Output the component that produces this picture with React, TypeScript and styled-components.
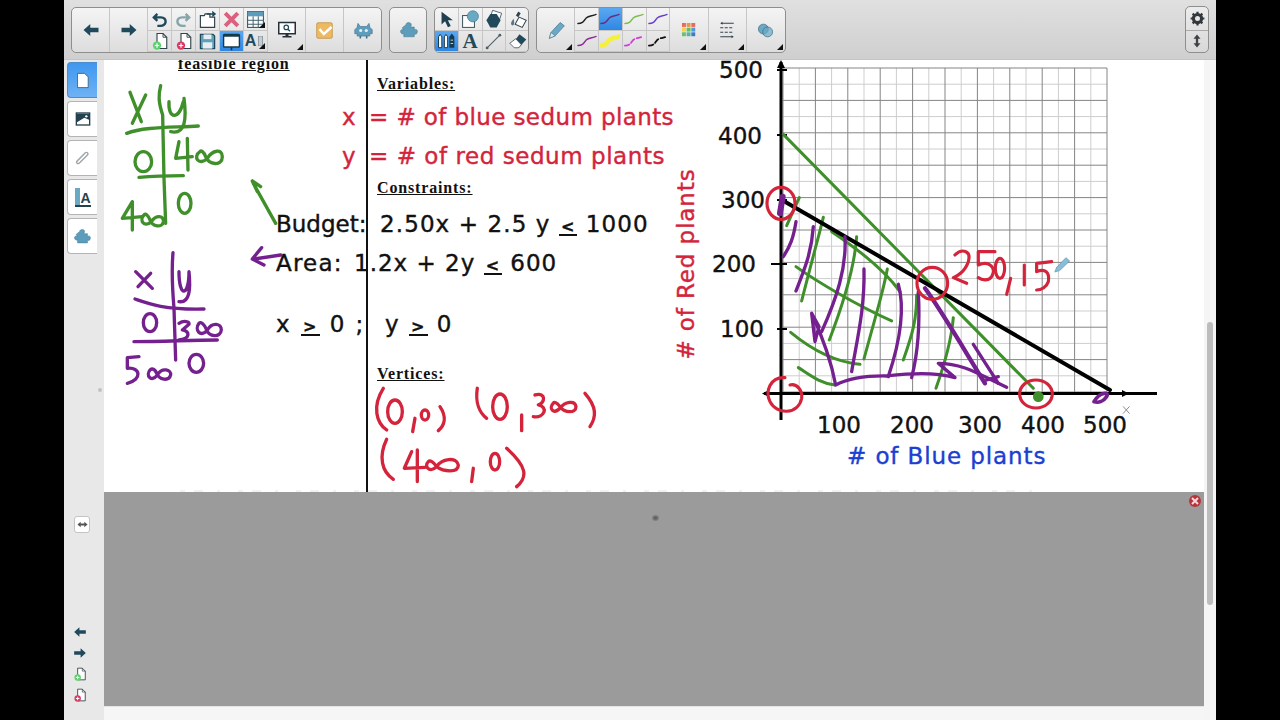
import styled, { createGlobalStyle } from 'styled-components'
import type { ReactNode } from 'react'

const GlobalStyle = createGlobalStyle`
  html, body {
    margin: 0;
    height: 100%;
    background: #000;
    overflow: hidden;
    font-family: "DejaVu Sans", sans-serif;
  }
`

const TEAL = '#21495c'
const INK_TEAL = '#5b9dbb'

function Svg({ size = 20, children }: { size?: number; children: ReactNode }) {
  return (
    <svg width={size} height={size} viewBox="0 0 24 24">
      {children}
    </svg>
  )
}

const ArrowLeft = ({ size = 18 }: { size?: number }) => (
  <Svg size={size}><path d="M2 12 L11 4 V9 H22 V15 H11 V20Z" fill={TEAL} /></Svg>
)
const ArrowRight = ({ size = 18 }: { size?: number }) => (
  <Svg size={size}><path d="M22 12 L13 4 V9 H2 V15 H13 V20Z" fill={TEAL} /></Svg>
)
const Undo = () => (
  <Svg size={17}>
    <path d="M9 4 L4 9 L9 14 M4 9 H14 C23 9 23 21 13 21 H9" fill="none" stroke={TEAL} strokeWidth="3.4" />
  </Svg>
)
const Redo = () => (
  <Svg size={17}>
    <path d="M15 4 L20 9 L15 14 M20 9 H10 C1 9 1 21 11 21 H15" fill="none" stroke="#86a5ab" strokeWidth="3.4" />
  </Svg>
)
const PageBadge = ({ color, size = 18 }: { color: string; size?: number }) => (
  <Svg size={size}>
    <path d="M8 2 H16 L21 7 V22 H8Z" fill="#fff" stroke="#33434c" strokeWidth="1.5" />
    <path d="M16 2 V7 H21" fill="none" stroke="#33434c" strokeWidth="1.2" />
    <circle cx="8" cy="18" r="5.5" fill={color} />
    <path d="M5 18 H11 M8 15 V21" stroke="#fff" strokeWidth="1.6" />
  </Svg>
)
const OpenPage = () => (
  <Svg size={19}>
    <path d="M3 7 H8 L9 5 H15 V9 H21 V22 H3Z" fill="#fff" stroke="#33434c" strokeWidth="1.5" />
    <path d="M11 4 H18 L18 1 L23 5 L18 9 V6 H11Z" fill={TEAL} />
  </Svg>
)
const Cross = () => (
  <Svg size={19}>
    <path d="M4 4 L20 20 M20 4 L4 20" stroke="#d9637e" strokeWidth="5" />
  </Svg>
)
const TableIcon = () => (
  <Svg size={19}>
    <rect x="2" y="2" width="20" height="20" fill="#fff" stroke="#3d5b68" strokeWidth="1.4" />
    <rect x="2" y="2" width="20" height="6" fill={INK_TEAL} />
    <path d="M2 13 H22 M2 18 H22 M9 8 V22 M15.500 8 V22" stroke="#3d5b68" strokeWidth="1.2" />
  </Svg>
)
const Floppy = () => (
  <Svg size={19}>
    <path d="M3 3 H19 L21 5 V21 H3Z" fill="#5f9fbc" stroke={TEAL} strokeWidth="1.6" />
    <rect x="7" y="3" width="10" height="6" fill="#e6eef2" />
    <rect x="6" y="13" width="12" height="8" fill="#e6eef2" />
  </Svg>
)
const Screen = () => (
  <Svg size={19}>
    <rect x="2" y="3" width="20" height="16" rx="1" fill="#fff" stroke="#173a4a" strokeWidth="1.8" />
    <rect x="2" y="3" width="20" height="3" fill="#173a4a" />
    <path d="M12 19 V23" stroke="#173a4a" strokeWidth="2" />
  </Svg>
)
const MeasureIcon = () => (
  <MeasureBox>
    A
    <Svg size={10}>
      <rect x="6" y="0" width="10" height="24" fill="#c5cdd0" stroke="#6b7c84" strokeWidth="1.5" />
    </Svg>
  </MeasureBox>
)
const MonitorSearch = () => (
  <Svg size={18}>
    <rect x="1" y="2" width="22" height="15" fill="#fff" stroke="#24313a" strokeWidth="2" />
    <circle cx="11" cy="8.500" r="3" fill="none" stroke={TEAL} strokeWidth="1.600" />
    <path d="M13 11 L16 13.500" stroke={TEAL} strokeWidth="1.800" />
    <path d="M10 17 H14 V20 H18 V22 H6 V20 H10Z" fill="#24313a" />
  </Svg>
)
const CheckBox = () => (
  <Svg size={17}>
    <rect x="1" y="1" width="22" height="22" rx="2" fill="#efb95f" stroke="#b98c3b" />
    <path d="M5 10 L11 17 L22 7" fill="none" stroke="#fff" strokeWidth="3.500" />
  </Svg>
)
const Robot = () => (
  <Svg size={19}>
    <path d="M5 3 L8 7 H16 L19 3 L20 8 L23 11 V16 H20 V19 H4 V16 H1 V11 L4 8Z" fill="#5f9dbd" stroke="#3d718d" strokeWidth="0.800" />
    <circle cx="8.500" cy="12" r="2" fill="#e8eef1" />
    <circle cx="15.500" cy="12" r="2" fill="#e8eef1" />
    <path d="M8 19 V22 M16 19 V22" stroke="#3d718d" strokeWidth="2" />
  </Svg>
)
const Puzzle = ({ size = 18 }: { size?: number }) => (
  <Svg size={size}>
    <path
      d="M8 5 C8 1 15 1 15 5 C15 7 14 7 14 8 H19 V12 C21 10 24 12 23 15 C22.500 18 20 18 19 17 V21 H5 V17 C2 18 0 15 1 12.500 C2 11 4 11 5 12 L3 9 Z"
      fill={INK_TEAL}
      stroke="#44778f"
      strokeWidth="0.700"
    />
  </Svg>
)
const Pointer = () => (
  <Svg size={17}>
    <path d="M5 1 L5 19 L10 14.500 L14 23 L18 21 L14 13 L21 13Z" fill="#1f4050" />
  </Svg>
)
const ShapeIcon = () => (
  <Svg size={19}>
    <rect x="2" y="7" width="15" height="15" fill="#fff" stroke="#45565e" strokeWidth="1.300" />
    <circle cx="15" cy="8" r="7" fill="#6aa9c4" stroke="#4d7f96" />
  </Svg>
)
const FillIcon = () => (
  <Svg size={19}>
    <rect x="9" y="2" width="12" height="10" fill="#fff" stroke="#45565e" transform="rotate(18 15 7)" />
    <path d="M8 5 H16 L21 13 L16 22 H8 L3 13Z" fill={TEAL} />
  </Svg>
)
const Bucket = () => (
  <Svg size={19}>
    <path d="M14 9 L23 13 L18 22 L9 18Z" fill="#fff" stroke="#33434c" strokeWidth="1.300" />
    <path d="M13 2 L16 4 L13 9 L10 7Z" fill="#33434c" />
    <path d="M7 11 C4 15 3 17 4.500 19 C7 21 9 17 7 11Z" fill="#5e7480" />
  </Svg>
)
const PensIcon = () => (
  <Svg size={20}>
    <path d="M5 4 L7 7 V20 H3 V7Z M12 4 L14 7 V20 H10 V7Z" fill="#fff" stroke="#173a4a" strokeWidth="1.200" />
    <path d="M19 3 L22 7 V20 H16 V7Z" fill="#173a4a" />
    <path d="M17.500 11 H20.500 M17.500 15 H20.500" stroke="#e6f0f5" />
  </Svg>
)
const LineIcon = () => (
  <Svg size={17}>
    <path d="M3 21 L21 3" stroke="#4e5f68" strokeWidth="1.500" />
    <circle cx="3" cy="21" r="2" fill="#4e5f68" />
    <circle cx="21" cy="3" r="2" fill="#4e5f68" />
  </Svg>
)
const EraserIcon = () => (
  <Svg size={18}>
    <path d="M14 3 L23 10 L13 21 L5 15Z" fill={TEAL} />
    <path d="M9 9 L1 15 L7 21 H13 L16.500 17Z" fill="#fff" stroke="#33434c" />
  </Svg>
)
const Pencil = () => (
  <Svg size={20}>
    <path d="M4 22 L6 15 L17 3 L22 7 L11 19Z" fill="#6ba8c6" stroke="#4f7f97" strokeWidth="1" />
    <path d="M4 22 L6 15 L11 19Z" fill="#e5e5e5" stroke="#4f7f97" strokeWidth="0.800" />
  </Svg>
)
const Stroke = ({ color, width = 1.500, dash }: { color: string; width?: number; dash?: string }) => (
  <svg width="20" height="14" viewBox="0 0 22 14">
    <path
      d="M1 12 C6 12 7 10 10 6 C13 3 17 4 21 2"
      fill="none"
      stroke={color}
      strokeWidth={width}
      strokeDasharray={dash}
      strokeLinecap="round"
    />
  </svg>
)
const Palette = () => (
  <svg width="14" height="14" viewBox="0 0 18 18">
    {['#ea6a5a', '#e8983f', '#e56a5f', '#f2d24e', '#68bd62', '#4f9bd4', '#69c16c', '#53b4a8', '#3f79c4'].map((c, i) => (
      <rect key={i} x={(i % 3) * 6} y={Math.floor(i / 3) * 6} width="5" height="5" fill={c} />
    ))}
  </svg>
)
const LineStyle = () => (
  <Svg size={18}>
    <path d="M3 3 L6 1 V5Z M21 21 L18 19 V23Z" fill="#33434c" />
    <path d="M4 3 H21 M3 21 H19" stroke="#33434c" strokeWidth="1.400" />
    <path d="M3 9 H21 M3 15 H21" stroke="#33434c" strokeWidth="1.400" strokeDasharray="4 2" />
  </Svg>
)
const Circles = () => (
  <Svg size={17}>
    <circle cx="9" cy="10" r="7" fill="#6ba8c6" stroke="#3f708a" />
    <circle cx="15" cy="14" r="7" fill="#6ba8c6" fillOpacity="0.700" stroke="#3f708a" />
  </Svg>
)
const Gear = () => (
  <Svg size={15}>
    <circle cx="12" cy="12" r="6.500" fill="none" stroke="#33383c" strokeWidth="5" />
    <path
      d="M12 1 V6 M12 18 V23 M1 12 H6 M18 12 H23 M4.200 4.200 L8 8 M16 16 L19.800 19.800 M19.800 4.200 L16 8 M8 16 L4.200 19.800"
      stroke="#33383c"
      strokeWidth="3.500"
    />
  </Svg>
)
const UpDown = () => (
  <Svg size={14}>
    <path d="M12 1 L18 8 H14 V16 H18 L12 23 L6 16 H10 V8 H6Z" fill="#3d4347" />
  </Svg>
)
const Paperclip = () => (
  <Svg size={17}>
    <path
      d="M20 6 L8 18 C5 21 2 18 5 15 L16 4 C18 2 21 5 19 7 L9 17"
      fill="none"
      stroke="#9fa7aa"
      strokeWidth="2"
    />
  </Svg>
)
const ImageIcon = () => (
  <Svg size={16}>
    <rect x="2" y="3" width="20" height="18" fill="#fff" stroke="#24414f" strokeWidth="2" />
    <path d="M3 4 H21 V13 L14 10 L3 17Z" fill="#24414f" />
    <circle cx="17" cy="8" r="1.800" fill="#fff" />
  </Svg>
)
const Expand = () => (
  <Svg size={11}>
    <path d="M1 12 L8 6 V10 H16 V6 L23 12 L16 18 V14 H8 V18Z" fill="#555" />
  </Svg>
)
const TextStyleIcon = () => (
  <TextStyleBox>
    <span>A</span>
  </TextStyleBox>
)

const App = styled.div`
  width: 1152px;
  height: 720px;
  margin-left: 64px;
  display: flex;
  flex-direction: column;
  background: #f4f4f4;
`

const Toolbar = styled.header`
  height: 60px;
  flex: none;
  box-sizing: border-box;
  padding: 7px 7px 0 7px;
  display: flex;
  align-items: flex-start;
  gap: 7px;
  background: linear-gradient(#e0e0e0, #cfcfcf);
  border-bottom: 1px solid #c4c4c4;
`

const ToolGroup = styled.div<{ $w: number }>`
  display: flex;
  width: ${(p) => p.$w}px;
  height: 46px;
  flex: none;
  box-sizing: border-box;
  border: 1px solid #8e8e8e;
  border-radius: 5px;
  overflow: hidden;
  background: linear-gradient(#f4f4f4, #dddddd);
`

const BigCell = styled.div`
  position: relative;
  flex: 1 0 38px;
  box-sizing: border-box;
  display: flex;
  align-items: center;
  justify-content: center;
  border-right: 1px solid #c6c6c6;

  &:last-child {
    border-right: 0;
  }
`

const Corner = styled.i`
  position: absolute;
  right: 2px;
  bottom: 2px;
  border-style: solid;
  border-width: 0 0 6px 6px;
  border-color: transparent transparent #111 transparent;
`

const SmallGrid = styled.div<{ $cols: number }>`
  flex: none;
  width: ${(p) => p.$cols * 24 - (p.$cols === 4 ? 1 : 0)}px;
  display: grid;
  grid-template-columns: repeat(${(p) => p.$cols}, 1fr);
  grid-template-rows: 23px 21px;
`

const SmallCell = styled.div<{ $on?: boolean }>`
  position: relative;
  display: flex;
  align-items: center;
  justify-content: center;
  box-sizing: border-box;
  border-right: 1px solid #c6c6c6;
  border-bottom: 1px solid #c6c6c6;
  background: ${(p) => (p.$on ? 'linear-gradient(#5aa8f2, #2f87e2)' : 'transparent')};
`

const SideGroup = styled.div`
  margin-left: auto;
  width: 24px;
  height: 47px;
  margin-top: -1px;
  box-sizing: border-box;
  border: 1px solid #8e8e8e;
  border-radius: 5px;
  overflow: hidden;
  display: grid;
  grid-template-rows: 1fr 1fr;
  background: linear-gradient(#ececec, #d8d8d8);
`

const SideCell = styled.div`
  display: flex;
  align-items: center;
  justify-content: center;

  & + & {
    border-top: 1px solid #aaa;
  }
`

const MeasureBox = styled.div`
  display: flex;
  align-items: center;
  font: 700 16px "Liberation Sans", sans-serif;
  color: ${TEAL};
`

const LetterA = styled.span`
  font: 700 21px "Liberation Serif", serif;
  color: ${TEAL};
`

const TextStyleBox = styled.div`
  width: 16px;
  height: 17px;
  background: linear-gradient(90deg, #6aa9c4 30%, transparent 30%);
  border-bottom: 2px solid #24414f;
  display: flex;
  justify-content: flex-end;
  align-items: flex-end;
  font: 700 14px "Liberation Sans", sans-serif;
  line-height: 14px;
  color: #24414f;
`

const Body = styled.div`
  flex: 1;
  min-height: 0;
  display: flex;
`

const Sidebar = styled.aside`
  position: relative;
  width: 40px;
  flex: none;
  box-sizing: border-box;
  padding: 2px 0 18px 3px;
  display: flex;
  flex-direction: column;
  background: #e8e8e8;
`

const Tabs = styled.nav`
  display: flex;
  flex-direction: column;
  gap: 3px;
`

const Tab = styled.div<{ $on?: boolean }>`
  width: 30px;
  height: 36px;
  box-sizing: border-box;
  display: flex;
  align-items: center;
  justify-content: center;
  border: 1px solid ${(p) => (p.$on ? '#4a8ccc' : '#b4b4b4')};
  border-right: 0;
  border-radius: 4px 0 0 4px;
  background: ${(p) => (p.$on ? 'linear-gradient(#3f97ef, #6fb2f4)' : '#fff')};
`

const Handle = styled.i`
  position: absolute;
  left: 34px;
  top: 328px;
  width: 4px;
  height: 4px;
  border-radius: 50%;
  background: #c2c2c2;
`

const ExpandButton = styled.div`
  width: 16px;
  height: 17px;
  margin: 262px 0 0 7px;
  display: flex;
  align-items: center;
  justify-content: center;
  border: 1px solid #c4c4c4;
  border-radius: 3px;
  background: #fff;
  box-sizing: border-box;
`

const PageTools = styled.div`
  margin: auto 0 0 6px;
  display: flex;
  flex-direction: column;
  gap: 7px;
  align-items: flex-start;

  svg {
    display: block;
  }
`

const Workspace = styled.main`
  width: 1100px;
  flex: none;
  display: flex;
  flex-direction: column;
`

const Canvas = styled.section`
  position: relative;
  height: 432px;
  flex: none;
  overflow: hidden;
  background: #fff;
`

const Shade = styled.div`
  position: relative;
  flex: 1;
  background: #9b9b9b;
`

const Footer = styled.div`
  height: 13px;
  flex: none;
  background: #f6f6f6;
  border-top: 1px solid #e4e4e4;
`

const CloseDot = styled.div`
  position: absolute;
  top: 3px;
  right: 3px;
  width: 12px;
  height: 12px;
  border-radius: 50%;
  background: #b8343d;
  display: flex;
  align-items: center;
  justify-content: center;
`

const Smudge = styled.i`
  position: absolute;
  left: 548px;
  top: 23px;
  width: 7px;
  height: 6px;
  border-radius: 50%;
  background: radial-gradient(#555, #9b9b9b);
`

const Scrollbar = styled.div`
  width: 12px;
  flex: none;
  padding-top: 262px;
  box-sizing: border-box;
  background: #f5f5f5;
`

const Thumb = styled.div`
  width: 6px;
  height: 283px;
  margin-left: 3px;
  border-radius: 3px;
  background: #bdbdbd;
`

const Ink = styled.svg`
  position: absolute;
  left: 0;
  top: 0;
`

const Rule = styled.div`
  position: absolute;
  left: 262px;
  top: 0;
  width: 2px;
  height: 100%;
  background: #111;
`

const Label = styled.span<{ $x: number; $y: number; $color?: string; $size?: number; $spacing?: number }>`
  position: absolute;
  left: ${(p) => p.$x - 104}px;
  top: ${(p) => p.$y - 68}px;
  line-height: 18px;
  white-space: pre;
  font-family: "DejaVu Sans", sans-serif;
  font-size: ${(p) => p.$size ?? 23}px;
  letter-spacing: ${(p) => p.$spacing ?? 0}px;
  color: ${(p) => p.$color ?? '#111'};
  -webkit-text-stroke: 0.4px ${(p) => p.$color ?? '#111'};
`

const Heading = styled(Label)`
  font-family: "Liberation Serif", serif;
  font-weight: 700;
  font-size: 16px;
  text-decoration: underline;
  letter-spacing: 0.85px;
  -webkit-text-stroke: 0;
`

const VerticalLabel = styled(Label)`
  transform: translate(-50%, -50%) rotate(-90deg);
  top: ${(p) => p.$y - 60}px;
`

const Under = styled.span`
  display: inline-block;
  font-size: 16px;
  font-weight: 700;
  line-height: 14px;
  padding: 0 2px;
  border-bottom: 2px solid #111;
  vertical-align: 0;
`

const FaintEdge = styled.path`
  stroke: #f1f1f1;
  stroke-width: 2;
  stroke-dasharray: 5 9 9 14 3 18;
  fill: none;
`

const GREEN = '#3f8f2a'
const PURPLE = '#74208f'
const RED = '#d3243b'

const gridMajor = Array.from({ length: 11 }, (_, i) => i)
const gridMinor = Array.from({ length: 10 }, (_, i) => i)

function Graph() {
  const left = 783
  const top = 68
  const step = 32.4
  return (
    <g fill="none">
      {gridMinor.map((i) => (
        <g key={i} stroke="#cdcdcd" strokeWidth="1">
          <path d={`M${left + (i + 0.5) * step} ${top} V${top + 10 * step}`} />
          <path d={`M${left} ${top + (i + 0.5) * step} H${left + 10 * step}`} />
        </g>
      ))}
      {gridMajor.map((i) => (
        <g key={i} stroke="#858585" strokeWidth="1">
          <path d={`M${left + i * step} ${top} V${top + 10 * step}`} />
          <path d={`M${left} ${top + i * step} H${left + 10 * step}`} />
        </g>
      ))}
      <path d="M781 62 V420 M764 393.500 H1157" stroke="#000" strokeWidth="3" />
      <path d="M781 60 L777 68 H785Z M762 393.500 L769 390 V397Z M1122 390 L1129 393.500 L1122 397Z" fill="#000" />
      <path d="M777 70 H787 M777 135 H787 M777 200 H787 M771 264 H787 M777 329 H787" stroke="#000" strokeWidth="2" />
    </g>
  )
}

const chartGreen = [
  'M388 428 L350 512',
  'M460 487 C450 530 430 600 395 738',
  'M560 545 C555 620 530 720 478 855',
  'M652 642 C640 710 620 770 582 912',
  'M740 720 C740 790 730 830 700 915',
  'M850 788 C845 850 830 910 798 1000',
  'M485 530 C560 580 640 640 690 710',
  'M378 635 C440 680 560 750 665 798',
  'M362 832 C420 880 490 920 570 928',
  'M385 938 C420 960 450 985 495 990',
]

const chartPurple = [
  'M378 500 C370 550 360 575 340 605',
  'M430 515 C425 590 405 640 378 708',
  'M525 545 C530 640 500 730 455 830',
  'M582 642 C585 760 560 860 545 950',
  'M685 688 C705 760 690 860 655 965',
  'M745 710 C750 800 745 890 725 968',
  'M425 775 L435 860 L447 815 L425 775 C450 830 480 900 497 990 C540 968 590 962 650 963 C720 955 790 950 855 968 L805 925 C880 925 930 960 1010 997',
  'M910 868 L985 985',
  'M950 975 L985 965',
]

function ChartInk() {
  return (
    <g transform="translate(670 55) scale(0.3333)" fill="none" strokeLinecap="round" strokeLinejoin="round">
      <path d="M340 238 L1090 1000" stroke={GREEN} strokeWidth="9" />
      {chartGreen.map((d) => (
        <path key={d} d={d} stroke={GREEN} strokeWidth="9" />
      ))}
      <path d="M345 440 L1320 1005" stroke="#000" strokeWidth="12" />
      {chartPurple.map((d) => (
        <path key={d} d={d} stroke={PURPLE} strokeWidth="10" />
      ))}
      <path d="M765 700 C810 760 880 880 945 985" stroke={PURPLE} strokeWidth="13" />
      <path d="M338 425 L330 475" stroke={PURPLE} strokeWidth="18" />
      <path d="M1272 1040 C1290 1010 1320 1010 1310 1025 C1300 1040 1285 1045 1272 1040" stroke={PURPLE} strokeWidth="11" />
      <circle cx="1105" cy="1025" r="16" fill={GREEN} />
      <g stroke={RED} strokeWidth="9.500">
        <ellipse cx="333" cy="445" rx="42" ry="48" />
        <ellipse cx="787" cy="685" rx="46" ry="48" />
        <ellipse cx="1098" cy="1017" rx="49" ry="42" />
        <path d="M345 968 C300 965 285 1010 300 1040 C320 1080 385 1080 395 1030 C398 1005 380 985 360 990" />
        <path d="M855 600 C875 580 905 585 895 620 C885 650 860 665 850 668 L890 685" />
        <path d="M975 590 L925 590 L925 630 C960 615 980 640 965 665 C955 680 935 675 925 668" />
        <ellipse cx="990" cy="640" rx="14" ry="30" />
        <path d="M1022 670 L1010 718" />
        <path d="M1063 630 L1063 690" />
        <path d="M1145 620 L1100 625 L1100 650 C1125 640 1140 650 1135 680 C1130 695 1115 705 1100 705" />
      </g>
      <path d="M1155 650 L1160 637 L1188 608 L1199 618 L1170 646Z" fill="#86bdd8" stroke="#5c8ca4" strokeWidth="2" />
      <path d="M1360 1055 L1378 1075 M1378 1055 L1360 1075" stroke="#777" strokeWidth="2.500" />
    </g>
  )
}

function VerticesInk() {
  return (
    <g transform="translate(340 60) scale(0.3333)" fill="none" stroke={RED} strokeWidth="10" strokeLinecap="round" strokeLinejoin="round">
      <path d="M130 985 C95 1040 110 1090 140 1110" />
      <ellipse cx="165" cy="1055" rx="22" ry="35" />
      <path d="M225 1075 L218 1115" />
      <ellipse cx="255" cy="1065" rx="11" ry="15" />
      <path d="M300 1040 C320 1070 315 1095 295 1112" />
      <path d="M412 985 C405 1030 420 1060 440 1075" />
      <ellipse cx="480" cy="1040" rx="22" ry="38" />
      <path d="M545 1065 L545 1112" />
      <path d="M585 1005 C620 995 615 1030 595 1035 C625 1040 615 1075 580 1070" />
      <path d="M640 1030 C625 1045 640 1065 660 1045 C675 1025 705 1020 708 1040 C708 1060 675 1060 660 1040 C650 1025 640 1025 640 1030" />
      <path d="M735 1000 C770 1040 770 1070 750 1100" />
      <path d="M140 1138 C115 1190 125 1235 160 1258" />
      <path d="M215 1175 L193 1225 L255 1222 M232 1170 L232 1265" />
      <path d="M265 1205 C250 1220 270 1240 290 1220 C305 1195 350 1190 355 1215 C355 1240 310 1235 290 1220 C280 1205 270 1200 265 1205" />
      <path d="M400 1225 L395 1265" />
      <ellipse cx="465" cy="1205" rx="14" ry="25" />
      <path d="M500 1165 C560 1220 565 1250 530 1280" />
    </g>
  )
}

function TablesInk() {
  return (
    <g transform="translate(64 55) scale(0.3333)" fill="none" strokeWidth="10" strokeLinecap="round" strokeLinejoin="round">
      <g stroke={GREEN}>
        <path d="M198 112 L232 200 M245 120 L205 205" />
        <path d="M290 92 C283 120 283 140 296 180 L300 370 L305 505" />
        <path d="M315 140 C312 195 345 195 358 140 M360 130 C368 190 365 240 320 230" />
        <path d="M188 235 C240 215 320 218 403 213" />
        <ellipse cx="238" cy="320" rx="25" ry="30" />
        <path d="M345 260 L335 310 L385 305 M370 250 L372 345" />
        <path d="M408 290 C385 305 405 335 430 310 C445 285 475 280 475 305 C475 335 435 330 425 305 C420 290 410 285 408 290" />
        <path d="M225 367 C280 362 320 362 358 362" />
        <ellipse cx="362" cy="445" rx="19" ry="30" />
        <path d="M205 440 L175 490 L235 485 M205 440 L205 525" />
        <path d="M240 480 C225 495 240 520 262 500 C275 480 300 480 298 500 C295 520 265 515 258 495 C252 480 245 475 240 480" />
      </g>
      <g stroke={PURPLE}>
        <path d="M327 593 C322 650 325 700 330 760 L335 915" />
        <path d="M215 650 L265 700 M260 655 L222 695" />
        <path d="M345 650 C345 730 375 725 375 650 C380 700 378 745 345 740" />
        <path d="M213 732 C250 745 300 765 420 762" />
        <ellipse cx="258" cy="803" rx="20" ry="27" />
        <path d="M345 805 C360 795 378 800 375 808 L355 825 C378 830 380 850 345 855" />
        <path d="M405 805 C390 825 410 850 430 825 C445 800 472 805 472 825 C470 850 435 845 428 825 C420 805 410 800 405 805" />
        <path d="M210 860 C300 860 380 855 460 855" />
        <path d="M225 905 L190 908 L190 940 C230 935 235 975 190 985" />
        <path d="M258 945 C245 960 260 985 280 960 C295 935 322 945 320 960 C315 980 285 975 278 955 C272 940 262 940 258 945" />
        <ellipse cx="397" cy="925" rx="22" ry="27" />
        <path d="M650 600 L570 612 M593 578 L565 612 L600 630" />
      </g>
      <path d="M635 505 L568 385 M565 378 L580 410 M565 378 L590 395" stroke={GREEN} />
    </g>
  )
}

export default function Page() {
  return (
    <>
      <GlobalStyle />
      <App>
        <Toolbar>
          <ToolGroup $w={311}>
            <BigCell><ArrowLeft /></BigCell>
            <BigCell><ArrowRight /></BigCell>
            <SmallGrid $cols={5}>
              <SmallCell><Undo /></SmallCell>
              <SmallCell><Redo /></SmallCell>
              <SmallCell><OpenPage /></SmallCell>
              <SmallCell><Cross /></SmallCell>
              <SmallCell><TableIcon /><Corner /></SmallCell>
              <SmallCell><PageBadge color="#5fd070" /></SmallCell>
              <SmallCell><PageBadge color="#d83a64" /></SmallCell>
              <SmallCell><Floppy /></SmallCell>
              <SmallCell $on><Screen /></SmallCell>
              <SmallCell><MeasureIcon /><Corner /></SmallCell>
            </SmallGrid>
            <BigCell><MonitorSearch /><Corner /></BigCell>
            <BigCell><CheckBox /></BigCell>
            <BigCell><Robot /></BigCell>
          </ToolGroup>
          <ToolGroup $w={38}>
            <BigCell><Puzzle /></BigCell>
          </ToolGroup>
          <ToolGroup $w={95}>
            <SmallGrid $cols={4}>
              <SmallCell><Pointer /></SmallCell>
              <SmallCell><ShapeIcon /></SmallCell>
              <SmallCell><FillIcon /></SmallCell>
              <SmallCell><Bucket /></SmallCell>
              <SmallCell $on><PensIcon /></SmallCell>
              <SmallCell><LetterA>A</LetterA></SmallCell>
              <SmallCell><LineIcon /></SmallCell>
              <SmallCell><EraserIcon /></SmallCell>
            </SmallGrid>
          </ToolGroup>
          <ToolGroup $w={250}>
            <BigCell><Pencil /><Corner /></BigCell>
            <SmallGrid $cols={4}>
              <SmallCell><Stroke color="#222" /></SmallCell>
              <SmallCell $on><Stroke color="#6b2c86" /></SmallCell>
              <SmallCell><Stroke color="#7cc04a" /></SmallCell>
              <SmallCell><Stroke color="#6a3fd0" /></SmallCell>
              <SmallCell><Stroke color="#8e2c9c" /></SmallCell>
              <SmallCell><Stroke color="#f5f03c" width={5} /></SmallCell>
              <SmallCell><Stroke color="#d23fd8" width={2} dash="5 3" /></SmallCell>
              <SmallCell><Stroke color="#111" width={2} dash="5 3" /></SmallCell>
            </SmallGrid>
            <BigCell><Palette /><Corner /></BigCell>
            <BigCell><LineStyle /><Corner /></BigCell>
            <BigCell><Circles /><Corner /></BigCell>
          </ToolGroup>
          <SideGroup>
            <SideCell><Gear /></SideCell>
            <SideCell><UpDown /></SideCell>
          </SideGroup>
        </Toolbar>
        <Body>
          <Sidebar>
            <Tabs>
              <Tab $on>
                <Svg size={17}>
                  <path d="M5 2 H15 L20 7 V22 H5Z" fill="#fff" stroke="#274c63" strokeWidth="1" />
                </Svg>
              </Tab>
              <Tab><ImageIcon /></Tab>
              <Tab><Paperclip /></Tab>
              <Tab><TextStyleIcon /></Tab>
              <Tab><Puzzle size={17} /></Tab>
            </Tabs>
            <Handle />
            <ExpandButton><Expand /></ExpandButton>
            <PageTools>
              <ArrowLeft size={14} />
              <ArrowRight size={14} />
              <PageBadge color="#5fd070" size={14} />
              <PageBadge color="#d83a64" size={14} />
            </PageTools>
          </Sidebar>
          <Workspace>
            <Canvas>
              <Heading $x={178} $y={63}>feasible region</Heading>
              <Heading $x={377} $y={83}>Variables:</Heading>
              <Heading $x={377} $y={187}>Constraints:</Heading>
              <Heading $x={377} $y={373}>Vertices:</Heading>

              <Label $x={342} $y={116} $color={RED}>x</Label>
              <Label $x={369} $y={116} $color={RED} $spacing={0.4}>= # of blue sedum plants</Label>
              <Label $x={342} $y={155} $color={RED}>y</Label>
              <Label $x={369} $y={155} $color={RED} $spacing={0.55}>= # of red sedum plants</Label>

              <Label $x={276} $y={223}>Budget:</Label>
              <Label $x={380} $y={223} $spacing={1.1}>2.50x + 2.5 y <Under>&lt;</Under> 1000</Label>
              <Label $x={276} $y={262} $spacing={1.2}>Area:</Label>
              <Label $x={354} $y={262} $spacing={1}>1.2x + 2y <Under>&lt;</Under> 600</Label>
              <Label $x={276} $y={323} $spacing={2}>x <Under>&gt;</Under> 0 ;</Label>
              <Label $x={385} $y={323} $spacing={1.5}>y <Under>&gt;</Under> 0</Label>

              <Label $x={719} $y={69}>500</Label>
              <Label $x={718} $y={135}>400</Label>
              <Label $x={721} $y={199}>300</Label>
              <Label $x={712} $y={263}>200</Label>
              <Label $x={720} $y={328}>100</Label>
              <Label $x={817} $y={424}>100</Label>
              <Label $x={890} $y={424}>200</Label>
              <Label $x={958} $y={424}>300</Label>
              <Label $x={1021} $y={424}>400</Label>
              <Label $x={1083} $y={424}>500</Label>
              <Label $x={847} $y={455} $color="#1b3fd1" $spacing={0.9}>
                # of Blue plants
              </Label>
              <VerticalLabel $x={686} $y={264} $color={RED} $spacing={0.9}>
                # of Red plants
              </VerticalLabel>

              <Ink width="1100" height="432" viewBox="104 60 1100 432">
                <TablesInk />
                <Graph />
                <ChartInk />
                <VerticesInk />
                <FaintEdge d="M180 491 H1040" />
              </Ink>
              <Rule />
            </Canvas>
            <Shade>
              <CloseDot>
                <svg width="8" height="8" viewBox="0 0 8 8">
                  <path d="M1 1 L7 7 M7 1 L1 7" stroke="#f6dada" strokeWidth="2" />
                </svg>
              </CloseDot>
              <Smudge />
            </Shade>
            <Footer />
          </Workspace>
          <Scrollbar>
            <Thumb />
          </Scrollbar>
        </Body>
      </App>
    </>
  )
}
